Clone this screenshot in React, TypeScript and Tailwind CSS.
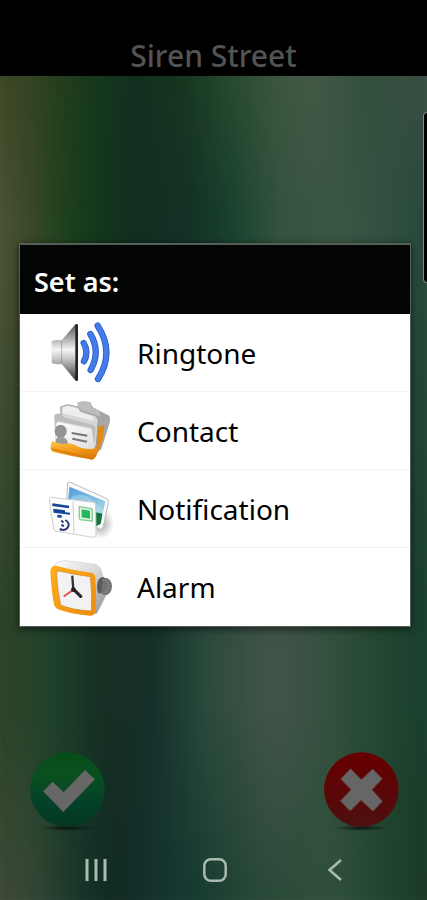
import React from 'react'

const SpeakerIcon: React.FC = () => (
  <svg viewBox="0 -6 240 240" className="h-20 w-20 shrink-0" aria-hidden="true">
    <defs>
      <linearGradient id="speaker-metal" x1="0" y1="0" x2="0" y2="1">
        <stop offset="0" stopColor="#555" />
        <stop offset="0.25" stopColor="#aaa" />
        <stop offset="0.45" stopColor="#f5f5f5" />
        <stop offset="0.62" stopColor="#c4c4c4" />
        <stop offset="1" stopColor="#333" />
      </linearGradient>
    </defs>
    <path d="M32 78 Q46 73 62 76 L103 28 Q111 24 111 34 V192 Q111 202 103 196 L62 147 Q46 149 32 144 Z" fill="url(#speaker-metal)" />
    <path d="M62 77 V146" stroke="#777" strokeWidth="3" opacity="0.5" />
    <path d="M103 30 Q111 24 111 34 V192 Q111 202 103 196 Z" fill="#222" />
    <g fill="none" stroke="#2c5cc9" strokeWidth="19" strokeLinecap="round">
      <path d="M128 84 Q144 111 129 139" />
      <path d="M148 57 Q180 110 149 165" />
      <path d="M170 32 Q222 112 171 192" />
    </g>
    <g fill="none" stroke="#447bea" strokeWidth="14" strokeLinecap="round">
      <path d="M128 84 Q144 111 129 139" />
      <path d="M148 57 Q180 110 149 165" />
      <path d="M170 32 Q222 112 171 192" />
    </g>
  </svg>
)

const ContactIcon: React.FC = () => (
  <svg viewBox="0 -6 240 240" className="h-20 w-20 shrink-0" aria-hidden="true">
    <defs>
      <linearGradient id="folder-orange" x1="0" y1="0" x2="0.4" y2="1">
        <stop offset="0" stopColor="#ffc447" />
        <stop offset="0.6" stopColor="#f39a18" />
        <stop offset="1" stopColor="#dc7c0b" />
      </linearGradient>
      <linearGradient id="folder-paper" x1="0" y1="0" x2="1" y2="1">
        <stop offset="0" stopColor="#fff" />
        <stop offset="1" stopColor="#dedede" />
      </linearGradient>
    </defs>
    <path d="M110 29 Q124 22 148 28 L155 43 L205 68 Q210 78 203 99 L181 168 L158 188 L112 60 Z" fill="#a6a6a6" />
    <path d="M110 29 Q124 22 148 28 L155 43 L176 53 L176 70 L110 55 Z" fill="#bcbcbc" />
    <path d="M166 103 L190 96 L185 142 L168 183 Q162 201 150 199 L125 180 Z" fill="#e08a18" />
    <path d="M59 42 L80 35 L113 43 L120 54 L164 68 L172 79 L166 158 L150 172 L61 75 Z" fill="#d6d6d6" stroke="#999" strokeWidth="3" />
    <path d="M65 43 L80 38 L110 46 L117 58 L158 71 L158 83 L65 61 Z" fill="#eee" />
    <path d="M40 66 Q45 60 62 62 L69 73 L157 96 L164 106 L158 176 L44 153 L40 75 Z" fill="#bdbdbd" />
    <path d="M46 94 Q47 84 58 88 L151 107 L160 166 L151 176 L43 153 Z" fill="url(#folder-paper)" stroke="#e8e8e8" strokeWidth="2" />
    <ellipse cx="59" cy="115" rx="18" ry="20" fill="#949494" />
    <path d="M44 150 Q42 130 60 130 Q82 135 82 159 Z" fill="#9b9b9b" />
    <path d="M92 120 L139 128 M94 137 L138 146" stroke="#777" strokeWidth="6" />
    <path d="M33 144 Q58 157 81 151 Q96 151 115 163 Q143 173 167 164 L168 180 Q161 205 147 199 Q92 190 38 177 Q27 173 29 161 Z" fill="url(#folder-orange)" />
    <path d="M31 168 Q85 180 153 197" fill="none" stroke="#da7c0a" strokeWidth="5" />
  </svg>
)

const NotificationIcon: React.FC = () => (
  <svg viewBox="0 -6 240 240" className="h-20 w-20 shrink-0" aria-hidden="true">
    <defs>
      <linearGradient id="photo-sky" x1="0" y1="0" x2="1" y2="1">
        <stop offset="0" stopColor="#4d9edb" />
        <stop offset="1" stopColor="#b5dbe8" />
      </linearGradient>
      <radialGradient id="card-shade">
        <stop offset="0" stopColor="#777" stopOpacity="0.75" />
        <stop offset="1" stopColor="#999" stopOpacity="0" />
      </radialGradient>
    </defs>
    <ellipse cx="178" cy="158" rx="42" ry="47" fill="url(#card-shade)" />
    <path d="M80 35 Q83 31 91 35 L195 82 Q203 85 202 96 L187 166 Q185 175 178 175 L75 124 Z" fill="#fafafa" stroke="#bbb" strokeWidth="3" />
    <path d="M86 47 L193 91 L179 157 L77 112 Z" fill="url(#photo-sky)" />
    <path d="M94 76 Q134 61 159 94 L187 114 L181 153 L80 103 Z" fill="#c4e5ec" opacity="0.4" />
    <path d="M161 123 L184 128 L179 158 L162 168 Z" fill="#13733f" />
    <path d="M25 82 Q27 77 34 79 L158 94 Q165 96 164 104 L165 190 Q164 201 156 199 L48 181 Q40 180 38 174 L25 90 Z" fill="#fcfcfc" stroke="#cfcfcf" strokeWidth="3" />
    <path d="M96 91 L99 188" stroke="#ccc" strokeWidth="3" />
    <g stroke="#174699" strokeWidth="8">
      <path d="M34 101 L84 108" />
      <path d="M37 117 L72 122" />
      <path d="M38 122 L87 128" strokeWidth="6" />
      <path d="M49 135 L62 137" />
    </g>
    <path d="M73 147 Q90 158 79 171 Q70 181 56 174" fill="none" stroke="#27377c" strokeWidth="6" />
    <path d="M61 148 L67 155 M61 162 L69 165" stroke="#27377c" strokeWidth="6" />
    <path d="M115 107 L151 113 Q155 115 154 119 V150 L118 146 Q115 145 115 139 Z" fill="#e3f7e3" stroke="#7fcf90" strokeWidth="4" />
    <path d="M122 115 L147 119 V143 L122 139 Z" fill="#25b65c" />
  </svg>
)

const AlarmIcon: React.FC = () => (
  <svg viewBox="0 -6 240 240" className="h-20 w-20 shrink-0" aria-hidden="true">
    <defs>
      <linearGradient id="clock-body" x1="0" y1="0" x2="1" y2="1">
        <stop offset="0" stopColor="#fff" />
        <stop offset="0.5" stopColor="#d7d7d7" />
        <stop offset="1" stopColor="#8e8e8e" />
      </linearGradient>
      <linearGradient id="clock-frame" x1="0" y1="0" x2="1" y2="1">
        <stop offset="0" stopColor="#ffae1f" />
        <stop offset="1" stopColor="#ef8b0c" />
      </linearGradient>
    </defs>
    <path d="M38 50 Q52 34 72 35 L158 45 Q181 49 184 75 L198 134 L174 181 Q166 204 152 190 Z" fill="url(#clock-body)" stroke="#cfcfcf" strokeWidth="2" />
    <ellipse cx="193" cy="112" rx="20" ry="26" fill="#717171" />
    <path d="M168 111 Q169 86 187 84 L194 91 Q181 101 182 119 Q183 133 174 134 Q168 128 168 111 Z" fill="#5a5a5a" />
    <path d="M183 93 Q202 92 204 108 Q205 125 188 132" fill="none" stroke="#858585" strokeWidth="4" />
    <path d="M49 51 Q93 63 150 71 Q163 74 163 87 Q167 130 164 177 Q163 202 147 200 Q93 195 55 182 Q41 178 38 163 Q30 111 28 68 Q29 48 49 51 Z" fill="url(#clock-frame)" />
    <path d="M54 66 Q99 77 148 83 Q154 132 151 186 Q92 183 59 168 Q48 117 47 72 Q48 65 54 66 Z" fill="#f2f2f4" stroke="#cc831f" strokeWidth="2" />
    <path d="M97 122 L94 83" stroke="#333" strokeWidth="7" strokeLinecap="round" />
    <path d="M98 121 L119 142" stroke="#292929" strokeWidth="10" strokeLinecap="round" />
    <path d="M96 123 L70 141" stroke="#e15345" strokeWidth="6" strokeLinecap="round" />
    <circle cx="97" cy="122" r="7" fill="#222" />
  </svg>
)

const CheckBadge: React.FC = () => (
  <svg viewBox="0 0 300 300" className="h-[100px] w-[100px]" aria-hidden="true">
    <defs>
      <linearGradient id="badge-green" x1="0" y1="0" x2="0" y2="1">
        <stop offset="0" stopColor="#064d18" />
        <stop offset="0.3" stopColor="#08511f" />
        <stop offset="0.7" stopColor="#04402a" />
        <stop offset="1" stopColor="#05351f" />
      </linearGradient>
      <radialGradient id="badge-shadow">
        <stop offset="0" stopColor="#020a06" stopOpacity="0.8" />
        <stop offset="1" stopColor="#020a06" stopOpacity="0" />
      </radialGradient>
    </defs>
    <ellipse cx="142" cy="264" rx="84" ry="9" fill="url(#badge-shadow)" />
    <circle cx="142" cy="149" r="112" fill="url(#badge-green)" />
    <path d="M69 154 L98 125 L131 156 L195 90 L225 118 L130 216 Z" fill="#676767" stroke="#345138" strokeWidth="2" />
  </svg>
)

const CrossBadge: React.FC = () => (
  <svg viewBox="0 0 300 300" className="h-[100px] w-[100px]" aria-hidden="true">
    <defs>
      <linearGradient id="badge-red" x1="0" y1="0" x2="0" y2="1">
        <stop offset="0" stopColor="#660000" />
        <stop offset="0.3" stopColor="#610304" />
        <stop offset="0.7" stopColor="#560a0b" />
        <stop offset="1" stopColor="#4c1010" />
      </linearGradient>
    </defs>
    <ellipse cx="154" cy="264" rx="84" ry="9" fill="url(#badge-shadow)" />
    <circle cx="154" cy="149" r="112" fill="url(#badge-red)" />
    <path d="M92 117 L122 86 L154 119 L188 87 L217 116 L186 149 L217 184 L189 214 L153 181 L121 213 L91 183 L123 149 Z" fill="#666" stroke="#6b3838" strokeWidth="2" />
  </svg>
)

const OPTIONS = [
  { label: 'Ringtone', Icon: SpeakerIcon },
  { label: 'Contact', Icon: ContactIcon },
  { label: 'Notification', Icon: NotificationIcon },
  { label: 'Alarm', Icon: AlarmIcon },
]

const Backdrop: React.FC = () => (
  <div className="absolute -inset-4 -z-10 blur-sm" aria-hidden="true">
    <div className="absolute inset-0 bg-[linear-gradient(90deg,#3e4a37_0%,#394935_9%,#15352a_21%,#102a20_29%,#153230_38%,#173c30_47%,#2a4a39_61%,#30503c_76%,#1c4029_91%,#193622_100%)]" />
    <div className="absolute inset-0 bg-[linear-gradient(90deg,#303e27_0%,#29442a_8%,#1d402a_16%,#162e23_25%,#15302a_37%,#294a3c_48%,#435449_63%,#33503f_75%,#214530_88%,#163c2c_100%)] [mask-image:linear-gradient(#000_78%,transparent_98%)]" />
    <div className="absolute inset-0 bg-[linear-gradient(90deg,#4d5335_3%,#3b4829_10%,#25441f_15%,#123a1c_23%,#122d20_32%,#143126_45%,#19422e_54%,#355341_65%,#3a5645_78%,#264839_98%)] [mask-image:linear-gradient(#000_30%,transparent_68%)]" />
    <div className="absolute inset-0 bg-[linear-gradient(90deg,#3d4723_3%,#344424_10%,#273f1c_15%,#16381c_24%,#112f1f_33%,#16361f_43%,#26492e_53%,#3a563c_63%,#445a46_72%,#32503d_82%,#3a4e44_98%)] [mask-image:linear-gradient(#000_9%,transparent_25%)]" />
  </div>
)

const App: React.FC = () => {
  return (
    <div className="relative isolate flex min-h-screen flex-col overflow-hidden font-['Noto_Sans',sans-serif]">
      <Backdrop />

      <header className="flex h-[76px] items-end justify-center bg-black">
        <h1 className="text-[30px] leading-10 font-medium text-[#535353]">Siren Street</h1>
      </header>

      <main className="flex flex-1 items-end justify-between pr-[17px] pl-5">
        <button type="button" aria-label="Confirm">
          <CheckBadge />
        </button>
        <button type="button" aria-label="Cancel">
          <CrossBadge />
        </button>
      </main>

      {/* System navigation */}
      <nav className="grid h-[60px] grid-cols-3 place-items-center pr-8 pl-9 text-[#a9bab0]">
        <button type="button" aria-label="Recent apps">
          <svg viewBox="0 0 24 24" className="h-6 w-6" stroke="currentColor" strokeWidth="3">
            <path d="M3 1 V23 M12 1 V23 M21 1 V23" />
          </svg>
        </button>
        <button type="button" aria-label="Home">
          <svg viewBox="0 0 24 24" className="h-6 w-6" fill="none" stroke="currentColor" strokeWidth="2.5">
            <rect x="1.3" y="1.3" width="21.4" height="21.4" rx="6.5" />
          </svg>
        </button>
        <button type="button" aria-label="Back">
          <svg viewBox="0 0 24 24" className="h-6 w-6" fill="none" stroke="currentColor" strokeWidth="2.5">
            <path d="M18 2 L6.5 12 L18 22" />
          </svg>
        </button>
      </nav>

      {/* Edge panel handle */}
      <div className="absolute top-28 right-0 h-[171px] w-1 rounded-l border border-r-0 border-[#7d8a83] bg-black" />

      {/* Dialog */}
      <div className="absolute inset-0 flex items-center pr-4 pb-[30px] pl-[19px]">
        <section
          role="dialog"
          aria-labelledby="dialog-title"
          className="w-full border border-t-2 border-[#565e59] bg-white shadow-[0_2px_8px_rgba(0,0,0,0.6)]"
        >
          <h2
            id="dialog-title"
            className="flex h-[69px] items-center bg-[#030504] px-3.5 pt-1 text-[27px] leading-9 font-semibold text-white"
          >
            Set as:
          </h2>
          <ul>
            {OPTIONS.map(({ label, Icon }) => (
              <li key={label} className="h-[78px] border-b border-[#f4f4f4] last:border-b-0">
                <button type="button" className="flex h-full w-full items-center gap-4 pl-[21px] text-[28px] leading-9 text-black">
                  <Icon />
                  {label}
                </button>
              </li>
            ))}
          </ul>
        </section>
      </div>
    </div>
  )
}

export default App
